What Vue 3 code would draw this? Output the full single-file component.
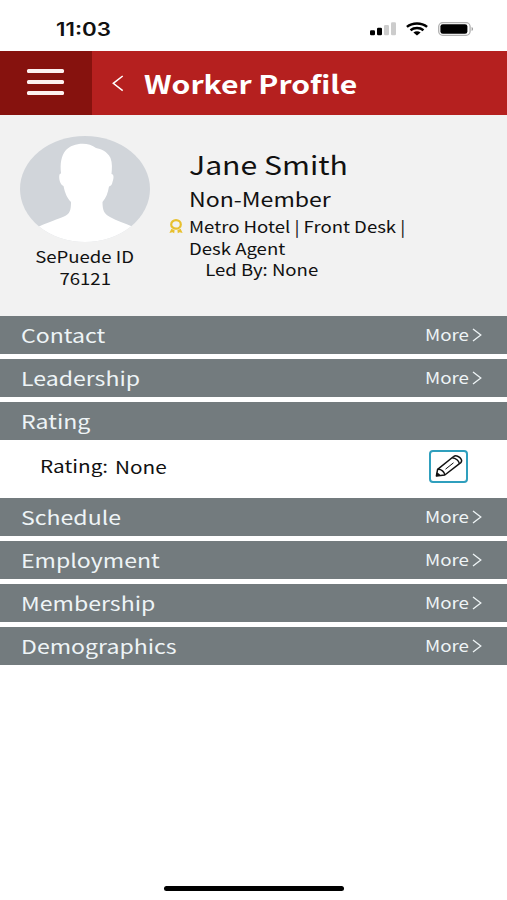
<template>
  <div class="screen">
    <div class="status-bar">
      <span class="time stretch">11:03</span>
      <div class="status-icons">
        <svg class="signal" width="26" height="14" viewBox="0 0 26 14">
          <rect x="0" y="8.2" width="5" height="5" rx="1.2" fill="#000" />
          <rect x="7" y="5.7" width="5" height="7.5" rx="1.2" fill="#000" />
          <rect x="14" y="3" width="5" height="10.2" rx="1.2" fill="#ccc" />
          <rect x="21" y="0.2" width="5" height="13" rx="1.2" fill="#ccc" />
        </svg>
        <svg class="wifi" width="22" height="14" viewBox="0 0 22 14">
          <g fill="none" stroke="#000" stroke-width="2.5">
            <path d="M0.9 4.9C6.6 0.3 15.4 0.3 21.1 4.9" />
            <path d="M4.5 8.2C8.3 5.3 13.7 5.3 17.5 8.2" />
          </g>
          <path d="M7.4 10.4C9.4 8.9 12.6 8.9 14.6 10.4L11 13.4Z" fill="#000" />
        </svg>
        <svg class="battery" width="36" height="14" viewBox="0 0 36 14">
          <rect x="0.7" y="0.7" width="31.4" height="12.6" rx="4" fill="none" stroke="#b0b0b0" stroke-width="1.3" />
          <rect x="2.4" y="2.2" width="27" height="9.6" rx="2.4" fill="#000" />
          <path d="M33.6 5C35.5 5.6 35.5 8.4 33.6 9Z" fill="#999" />
        </svg>
      </div>
    </div>

    <header class="header">
      <button class="menu" aria-label="Menu">
        <i></i>
        <i></i>
        <i></i>
      </button>
      <svg class="back" width="12" height="17" viewBox="0 0 12 17">
        <path d="M10.7 1L1.3 8.3L10.7 15.6" fill="none" stroke="#fff" stroke-width="1.5" />
      </svg>
      <h1 class="title stretch">Worker Profile</h1>
    </header>

    <section class="profile">
      <div class="identity">
        <svg class="avatar" width="130" height="106" viewBox="0 0 130 106">
          <defs>
            <clipPath id="avatar-clip">
              <ellipse cx="65" cy="53" rx="65" ry="53" />
            </clipPath>
          </defs>
          <g clip-path="url(#avatar-clip)">
            <rect width="130" height="106" fill="#d1d5da" />
            <path
              d="M0 106V98C8 95 14 93 20 90C29 86 38 83 44 80.5C50 78 51 74 51 66C47 62 45 57 43.5 50C40 49 38.5 42 39.5 38.5C40 37.5 41 38 41 37C40 28 41 20 46 14C52 7 68 5 76 12C81 13 87 15 90.5 22C92.5 27 92 33 91.5 38C94 38 94 42 92.5 46C92 49 90.5 50 89 50.5C88 57 86 62 82.5 66C82.5 74 84 78 90 81C97 85 105 87 111 90C118 93 123 95 130 98V106Z"
              fill="#fff"
            />
          </g>
        </svg>
        <span class="small id-line stretch">SePuede ID</span>
        <span class="small id-line stretch">76121</span>
      </div>
      <div class="details">
        <div class="name stretch">Jane Smith</div>
        <div class="member stretch">Non-Member</div>
        <div class="job">
          <svg class="award" width="14" height="15" viewBox="0 0 14 15">
            <ellipse cx="7" cy="5.4" rx="4.8" ry="4.2" fill="none" stroke="#e8c02e" stroke-width="2.2" />
            <path d="M2.4 9.8L5.6 11.2L5.2 14.2L3.4 13.3L0.4 13.9Z" fill="#e8c02e" />
            <path d="M11.6 9.8L8.4 11.2L8.8 14.2L10.6 13.3L13.6 13.9Z" fill="#e8c02e" />
          </svg>
          <div class="small stretch">Metro Hotel | Front Desk |<br />Desk Agent</div>
        </div>
        <div class="small led-by stretch">Led By: None</div>
      </div>
    </section>

    <main class="sections">
      <template v-for="section in sections" :key="section.title">
        <div class="bar">
          <span class="bar-title stretch">{{ section.title }}</span>
          <a v-if="!section.open" class="more">
            <span class="more-text stretch">More</span>
            <svg width="10" height="14" viewBox="0 0 10 14">
              <path d="M1 0.9L8.8 7L1 13.1" fill="none" stroke="#eef4f6" stroke-width="1.3" />
            </svg>
          </a>
        </div>
        <div v-if="section.open" class="rating">
          <span class="rating-label stretch">Rating:</span>
          <span class="rating-value stretch">None</span>
          <button class="edit" aria-label="Edit rating">
            <svg width="28" height="24" viewBox="0 0 28 24">
              <g fill="none" stroke="#111" stroke-width="1.5" stroke-linejoin="round">
                <path d="M1.4 21.9L2.6 15.4L18.6 2.5C21.8 -0.2 29 5.4 25.8 8.6L9.8 21L1.4 21.9Z" />
                <path d="M2.6 15.4C6 15 9.8 18 9.8 21" />
                <path d="M17.2 3.7C20.6 4 24.2 6.8 24.4 9.7" />
                <path d="M10.5 15.2L18.5 8.8" stroke-width="1" />
              </g>
              <path d="M1 22.2L1.8 18.4C3.6 18.8 5 20 5.4 21.7Z" fill="#111" />
            </svg>
          </button>
        </div>
      </template>
    </main>

    <div class="home-indicator"></div>
  </div>
</template>

<script setup>
import { ref } from 'vue'

const sections = ref([
  { title: 'Contact', open: false },
  { title: 'Leadership', open: false },
  { title: 'Rating', open: true },
  { title: 'Schedule', open: false },
  { title: 'Employment', open: false },
  { title: 'Membership', open: false },
  { title: 'Demographics', open: false }
])
</script>

<style>
body {
  margin: 0;
  background: #fff;
}
</style>

<style scoped>
.screen {
  display: flex;
  flex-direction: column;
  width: 507px;
  height: 900px;
  overflow: hidden;
  background: #fff;
  color: #111;
  font-family: 'Noto Sans CJK SC', 'Noto Sans', sans-serif;
}

button {
  padding: 0;
  border: 0;
}

/* wide lettering */
.stretch {
  transform: scaleX(1.16);
  transform-origin: left center;
  white-space: nowrap;
}

.status-bar {
  display: flex;
  justify-content: space-between;
  height: 51px;
  padding: 0 34px 0 56px;
  box-sizing: border-box;
}

.time {
  margin-top: 18px;
  height: 24px;
  font: 600 18px/24px Inter, sans-serif;
  color: #111;
  transform: scaleX(1.24);
}

.status-icons {
  display: flex;
  gap: 10px;
  padding: 21.5px 0 0;
  margin-right: -1px;
}

.header {
  display: flex;
  align-items: center;
  height: 64px;
  background: #b5201f;
}

.menu {
  display: flex;
  flex-direction: column;
  align-items: center;
  justify-content: center;
  gap: 7px;
  width: 92px;
  height: 100%;
  padding: 0 2px 2px 0;
  box-sizing: border-box;
  background: #86120e;
}

.menu i {
  width: 37px;
  height: 4px;
  border-radius: 1.5px;
  background: #fdf1f0;
}

.back {
  margin-left: 20px;
}

.title {
  margin: 0 0 0 20px;
  font-size: 25px;
  line-height: 30px;
  font-weight: 700;
  color: #fff;
  transform: scaleX(1.205);
}

.profile {
  display: flex;
  height: 201px;
  background: #f2f2f2;
}

.identity {
  display: flex;
  flex-direction: column;
  align-items: center;
  width: 130px;
  padding: 21px 0 0 20px;
}

.small {
  font-size: 16px;
  line-height: 21.5px;
}

.avatar {
  margin-bottom: 4px;
}

.id-line {
  transform-origin: center;
}

.details {
  padding: 30.5px 0 0 39px;
}

.name {
  font-size: 26px;
  line-height: 36px;
}

.member {
  font-size: 19.5px;
  line-height: 34px;
  transform: scaleX(1.185);
}

.job {
  display: flex;
  gap: 6px;
  margin: 0.7px 0 0 -20px;
}

.award {
  margin-top: 3px;
}

.led-by {
  padding-left: 14px;
}

.sections {
  flex: 1;
}

.bar {
  display: flex;
  align-items: center;
  justify-content: space-between;
  height: 37.5px;
  margin-bottom: 5.5px;
  padding: 0 25px 0 21px;
  background: #737b7e;
  color: #eef4f6;
}

.bar-title {
  margin-top: -1px;
  font-size: 19px;
  transform: scaleX(1.215);
}

.more {
  display: flex;
  align-items: center;
  width: 57px;
}

.more-text {
  width: 47px;
  margin-top: -2px;
  font-size: 16px;
  transform: scaleX(1.17);
}

.rating {
  display: flex;
  height: 53px;
  padding: 4.5px 39px 0 40px;
  box-sizing: border-box;
}

.rating-label,
.rating-value {
  margin-top: 5.5px;
  font-size: 17px;
  line-height: 22px;
  transform: scaleX(1.22);
}

.rating-label {
  width: 75px;
}

.rating-value {
  margin-top: 6.5px;
}

.edit {
  display: flex;
  align-items: center;
  justify-content: center;
  width: 39px;
  height: 33px;
  margin-left: auto;
  border: 2px solid #2f9fbd;
  border-radius: 4px;
  background: #fff;
}

.home-indicator {
  align-self: center;
  width: 180px;
  height: 5px;
  margin-bottom: 9px;
  border-radius: 3px;
  background: #000;
}
</style>
